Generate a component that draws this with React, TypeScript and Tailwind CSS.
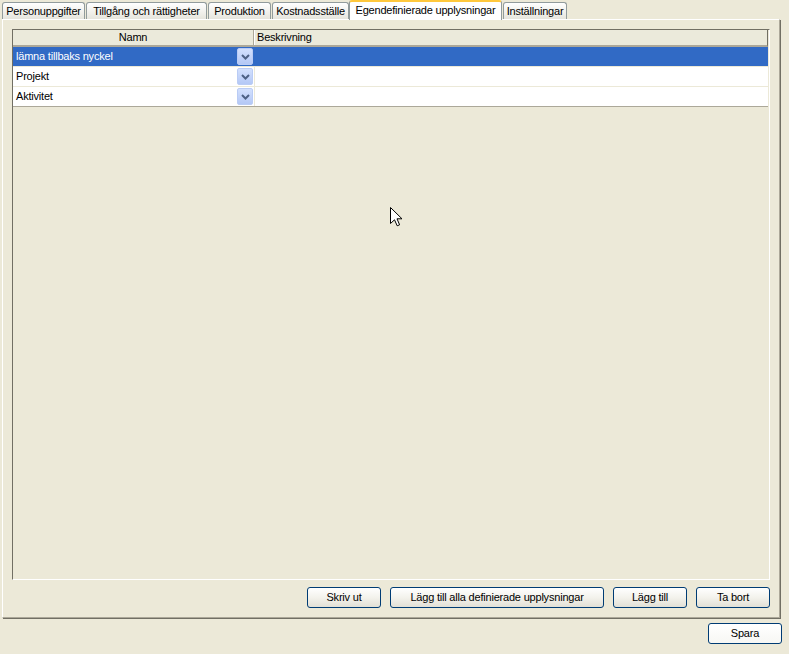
import React from "react";

const tabs = [
  { label: "Personuppgifter", w: "w-[83px]", ml: "ml-0" },
  { label: "Tillgång och rättigheter", w: "w-[121px]", ml: "ml-[1px]" },
  { label: "Produktion", w: "w-[63px]", ml: "ml-[1px]" },
  { label: "Kostnadsställe", w: "w-[77px]", ml: "ml-[1px]" },
  { label: "Egendefinierade upplysningar", w: "w-[153px]", ml: "ml-0", active: true },
  { label: "Inställningar", w: "w-[64px]", ml: "ml-[1px]" },
];

const rows = ["lämna tillbaks nyckel", "Projekt", "Aktivitet"];

function ComboButton() {
  return (
    <div className="w-[16px] h-[17px] rounded-[2px] border border-[#BACCF5] bg-gradient-to-b from-[#D3E0FD] to-[#B4C8F6] flex items-center justify-center">
      <svg width="9" height="6" viewBox="0 0 9 6">
        <path d="M1 1 L4.5 4.5 L8 1" fill="none" stroke="#4D6185" strokeWidth="2" />
      </svg>
    </div>
  );
}

function XpButton({ children, w, white }: { children: React.ReactNode; w: string; white?: boolean }) {
  return (
    <button
      className={`${w} h-[21px] rounded-[3px] border border-[#003C74] text-black text-[11px] leading-none flex items-center justify-center ${
        white ? "bg-gradient-to-b from-white to-[#F7F7F4]" : "bg-gradient-to-b from-white via-[#F3F2EC] to-[#E2E0D6]"
      }`}
    >
      {children}
    </button>
  );
}

export default function App() {
  return (
    <div className="relative w-[789px] h-[654px] overflow-hidden bg-[#ECE9D8] text-[11px] tracking-[-0.2px] text-black font-['Liberation_Sans',Arial,sans-serif]">
      {/* tab strip */}
      <div className="relative z-10 flex items-end h-[19px] pl-[2px]">
        {tabs.map((t) =>
          t.active ? (
            <div
              key={t.label}
              className={`${t.w} ${t.ml} h-[20px] -mb-px bg-white border-x border-[#919B9C] border-t-2 border-t-[#FFC83C] rounded-t-[3px] flex items-center justify-center pb-[2px]`}
            >
              {t.label}
            </div>
          ) : (
            <div
              key={t.label}
              className={`${t.w} ${t.ml} h-[17px] border border-b-0 border-[#919B9C] rounded-t-[3px] bg-gradient-to-b from-white to-[#E6E5DD] flex items-center justify-center`}
            >
              {t.label}
            </div>
          )
        )}
      </div>

      {/* tab panel */}
      <div className="ml-[2px] w-[778px] h-[599px] border-t border-l border-white border-r border-b border-r-[#ACA899] border-b-[#ACA899] shadow-[1px_1px_0_#716F64] px-[9px] pt-[9px]">
        <div className="w-[758px] h-[551px] border-t border-l border-[#716F64] border-r border-b border-r-white border-b-white">
          <div className="w-[755px]">
            {/* header */}
            <div className="flex h-[17px] border-b-2 border-[#ACA899] border-r border-r-[#716F64] bg-[#EBEADB]">
              <div className="w-[241px] border-r border-[#ACA899] flex items-center justify-center">Namn</div>
              <div className="flex-1 border-l border-white flex items-center pl-[2px]">Beskrivning</div>
            </div>
            {rows.map((r, i) => (
              <div
                key={r}
                className={`flex h-[20px] border-b ${i === 2 ? "border-[#ACA899]" : "border-[#ECE9D8]"} ${
                  i === 0 ? "bg-[#316AC5] text-white" : "bg-white"
                }`}
              >
                <div className="w-[241px] flex items-center justify-between pl-[3px] pr-[1px]">
                  <span>{r}</span>
                  <ComboButton />
                </div>
                <div className={`flex-1 border-l ${i === 0 ? "border-[#316AC5]" : "border-[#ECE9D8]"}`} />
              </div>
            ))}
          </div>
        </div>

        <div className="flex justify-end gap-[9px] mt-[7px] w-[758px]">
          <XpButton w="w-[74px]">Skriv ut</XpButton>
          <XpButton w="w-[214px]">Lägg till alla definierade upplysningar</XpButton>
          <XpButton w="w-[74px]">Lägg till</XpButton>
          <XpButton w="w-[74px]">Ta bort</XpButton>
        </div>
      </div>

      <div className="flex justify-end pr-[7px] mt-[5px]">
        <XpButton w="w-[74px]" white>
          Spara
        </XpButton>
      </div>

      {/* mouse pointer */}
      <svg className="absolute left-[390px] top-[207px]" width="13" height="20" viewBox="0 0 13 20">
        <path
          d="M0.5 0.5 L0.5 16.5 L4.5 12.8 L7.2 18.8 L9.6 17.8 L7 11.8 L12 11.8 Z"
          fill="white"
          stroke="black"
          strokeWidth="1"
          strokeLinejoin="miter"
        />
      </svg>
    </div>
  );
}
